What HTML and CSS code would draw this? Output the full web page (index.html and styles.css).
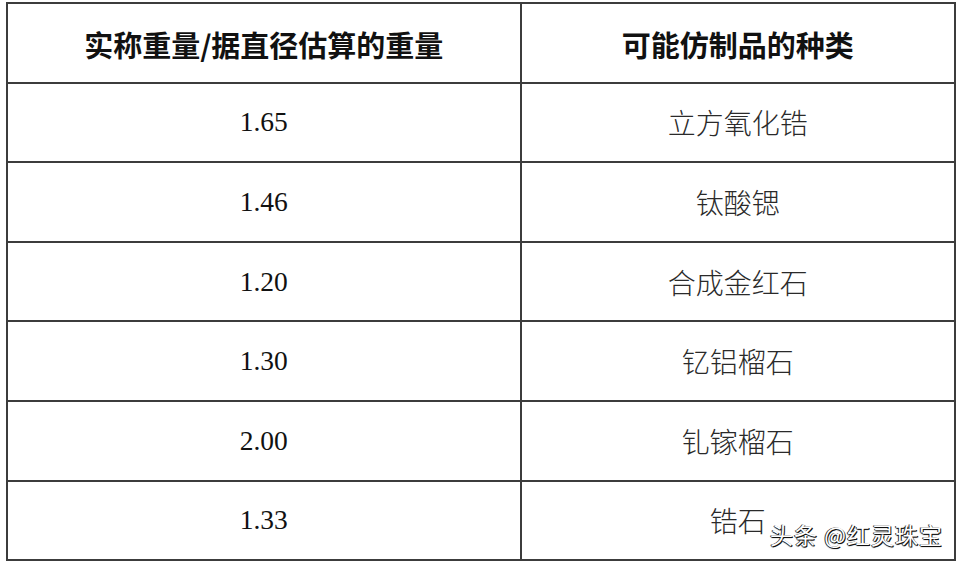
FILE: index.html
```html
<!DOCTYPE html>
<html lang="zh">
<head>
<meta charset="utf-8">
<title>仿制品比较表</title>
<link rel="stylesheet" href="styles.css">
</head>
<body>
<div class="page">
  <div class="table">
    <div class="cell head">实称重量/据直径估算的重量</div>
    <div class="cell head">可能仿制品的种类</div>
    <div class="cell num">1.65</div>
    <div class="cell cjk">立方氧化锆</div>
    <div class="cell num">1.46</div>
    <div class="cell cjk">钛酸锶</div>
    <div class="cell num">1.20</div>
    <div class="cell cjk">合成金红石</div>
    <div class="cell num">1.30</div>
    <div class="cell cjk">钇铝榴石</div>
    <div class="cell num">2.00</div>
    <div class="cell cjk">钆镓榴石</div>
    <div class="cell num">1.33</div>
    <div class="cell cjk">锆石</div>
  </div>
  <div class="watermark">头条 @红灵珠宝</div>
</div>
</body>
</html>
```

FILE: styles.css
```css
html, body {
  margin: 0;
  padding: 0;
  background: #ffffff;
}

.page {
  position: relative;
  width: 961px;
  height: 565px;
  padding: 2px 0 0 6px;
  box-sizing: border-box;
}

.table {
  width: 950px;
  box-sizing: border-box;
  border: 2px solid #3c3c3c;
  background: #3c3c3c;
  display: grid;
  grid-template-columns: 511.5px 432.5px;
  grid-template-rows: repeat(7, 77.6px);
  gap: 2px;
}

.cell {
  background: #ffffff;
  display: flex;
  align-items: center;
  justify-content: center;
  color: #111111;
}

.head {
  font-family: "Noto Sans CJK SC", "Noto Sans", sans-serif;
  font-weight: 700;
  font-size: 29px;
  padding-top: 3px;
}

.num {
  font-family: "Liberation Serif", "Times New Roman", serif;
  font-size: 27.5px;
}

.cjk {
  font-family: "Noto Sans CJK SC", sans-serif;
  font-weight: 300;
  font-size: 28px;
  color: #2a2a2a;
}

.watermark {
  position: absolute;
  left: 770px;
  top: 522px;
  font-family: "Noto Sans CJK SC", sans-serif;
  font-size: 23px;
  line-height: 24px;
  color: #ffffff;
  letter-spacing: 1px;
  text-shadow: 1px 1px 0 #111111, -1px 0 0 #333333, 0 1px 1px #222222;
}
```
